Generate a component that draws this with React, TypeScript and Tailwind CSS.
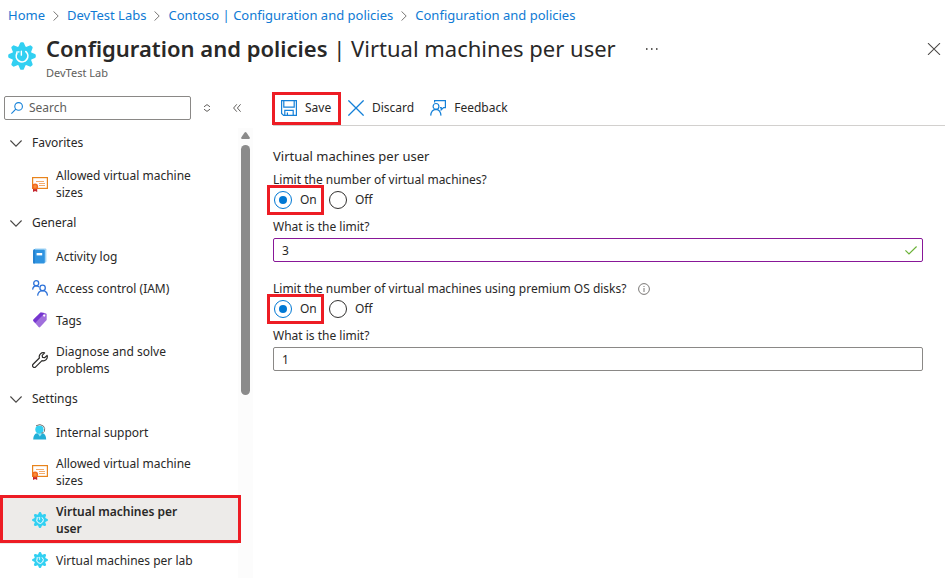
import React from "react";

const SANS = "font-['Noto_Sans','Open_Sans',sans-serif]";

function GearIcon({ className }: { className: string }) {
  return (
    <svg viewBox="0 0 26 26" className={className} aria-hidden="true">
      <g fill="#32d0f2">
        <circle cx="13" cy="13" r="9.2" />
        {[0, 45, 90, 135, 180, 225, 270, 315].map((a) => (
          <path key={a} d="M9.2 5.5 L11.2 1 Q11.5 0.2 12.2 0.2 H13.8 Q14.5 0.2 14.8 1 L16.8 5.5 Z" transform={`rotate(${a} 13 13)`} />
        ))}
      </g>
      <path d="M8.2 10.6 A5.4 5.4 0 1 0 16.6 9" fill="none" stroke="#fff" strokeWidth="1.6" strokeLinecap="round" />
      <path d="M12.4 8.6 V12.2 M8 9.4 L10.2 9.2" stroke="#fff" strokeWidth="1.3" strokeLinecap="round" />
    </svg>
  );
}

function CertificateIcon() {
  return (
    <svg viewBox="0 0 16 16" className="size-4" aria-hidden="true">
      <rect x="0.6" y="1.6" width="14.8" height="10.8" fill="#fff" stroke="#e8841c" strokeWidth="1.2" />
      <path d="M4 5.5 H12 M7 7.5 H13 M7 9.5 H13" stroke="#f2a35c" strokeWidth="0.9" />
      <path d="M1 11 H5.2 V16 L3.1 14.9 L1 16 Z" fill="#c4262e" />
      <circle cx="3.1" cy="10.4" r="3" fill="#f26b21" />
      <circle cx="3.1" cy="10.4" r="1.5" fill="#f9903a" />
    </svg>
  );
}

function BookIcon() {
  return (
    <svg viewBox="0 0 16 16" className="size-4" aria-hidden="true">
      <path d="M3 0.5 H13.4 Q14.4 0.5 14.4 1.5 V13.5 Q14.4 14.5 13.4 14.5 H3 Z" fill="#9fd3f5" />
      <path d="M2.4 1 Q1.2 1.2 1.2 2.4 V14.4 Q1.2 15.6 2.4 15.6 H11.8 Q12.8 15.6 12.8 14.6 V2.6 Q12.8 1.8 11.8 1.8 H3.4 Z" fill="#2f93e0" />
      <path d="M1.2 2.4 V14.4 Q1.2 15.6 2.4 15.6 H2.6 V1.8 Z" fill="#1b78c8" />
      <rect x="4.6" y="5" width="5.6" height="2.4" fill="#fff" />
    </svg>
  );
}

function PeopleIcon() {
  return (
    <svg viewBox="0 0 16 16" className="size-4" fill="none" stroke="#2f73d9" strokeWidth="1.3" aria-hidden="true">
      <circle cx="4.2" cy="3.2" r="2.5" />
      <circle cx="10.6" cy="7.9" r="2.7" />
      <path d="M0.6 9.6 Q1 6 4.2 5.8 Q5.8 5.8 7 7" />
      <path d="M5.6 15.6 Q6.2 10.9 10.6 10.7 Q15 10.9 15.5 15.6" />
    </svg>
  );
}

function TagIcon() {
  return (
    <svg viewBox="0 0 16 16" className="size-4" aria-hidden="true">
      <path d="M8.6 0.6 L13.6 1.2 Q14.6 1.4 14.7 2.4 V8 L8.2 15 Q7.4 15.8 6.6 15 L1.4 9 Q0.9 8.3 1.5 7.6 Z" fill="#a06fdc" />
      <path d="M8.6 0.6 L12.8 1.1 L3.2 11 L1.4 9 Q0.9 8.3 1.5 7.6 Z" fill="#7636d0" />
      <circle cx="12.2" cy="3.6" r="1.1" fill="#fff" />
    </svg>
  );
}

function WrenchIcon() {
  return (
    <svg viewBox="0 0 16 16" className="size-4" fill="none" stroke="#2b2a29" strokeWidth="1.2" strokeLinejoin="round" aria-hidden="true">
      <path d="M12.6 0.9 A4.1 4.1 0 0 0 7.4 6 L1.1 12.2 A1.8 1.8 0 0 0 3.7 14.9 L10 8.6 A4.1 4.1 0 0 0 15.1 3.4 L12.6 5.7 L10.5 5.3 L10.2 3.3 Z" />
    </svg>
  );
}

function SupportIcon() {
  return (
    <svg viewBox="0 0 16 16" className="size-4" aria-hidden="true">
      <path d="M1.2 15.6 Q1.4 9.8 5 9.2 H10.6 Q14 9.8 14.2 15.6 Z" fill="#22aed6" />
      <path d="M5.2 8.8 H10.6 L7.9 12.6 Z" fill="#9be7f7" />
      <circle cx="7.4" cy="5.6" r="4.1" fill="#32d0f2" />
      <path d="M4 1.8 Q8 -0.8 11.4 2 Q13.4 4.4 12.4 7.4 Q11.4 9 9.4 9.2" fill="none" stroke="#767676" strokeWidth="1" />
    </svg>
  );
}

function SaveIcon() {
  return (
    <svg viewBox="0 0 16 16" className="size-4" fill="none" stroke="#1480d8" strokeWidth="1.2" aria-hidden="true">
      <path d="M0.6 0.6 H15.4 V15.4 H2.6 L0.6 13.4 Z" />
      <path d="M2.8 0.6 V7.2 H13.2 V0.6" />
      <path d="M3.8 15.4 V10.4 H12.2 V15.4 M6.4 15 V12.6" />
    </svg>
  );
}

function DiscardIcon() {
  return (
    <svg viewBox="0 0 16 16" className="size-4" stroke="#1480d8" strokeWidth="1.3" aria-hidden="true">
      <path d="M0.4 0.4 L15.6 15.6 M15.6 0.4 L0.4 15.6" />
    </svg>
  );
}

function FeedbackIcon() {
  return (
    <svg viewBox="0 0 16 16" className="size-4" fill="none" stroke="#1480d8" strokeWidth="1.2" aria-hidden="true">
      <path d="M4.6 2.6 V0.6 H15.4 V7.6 H13.6 L11.2 9.8 V7.6 H10" />
      <circle cx="6" cy="6.4" r="2.9" />
      <path d="M0.7 15.6 Q1.2 9.6 6 9.4 Q10.4 9.6 11 15.6" />
    </svg>
  );
}

function ChevronDown() {
  return (
    <svg viewBox="0 0 12 7" className="h-[7px] w-3 shrink-0" fill="none" stroke="#484644" strokeWidth="1.1" aria-hidden="true">
      <path d="M0.4 0.5 L6 6.1 L11.6 0.5" />
    </svg>
  );
}

function Crumb({ children, last }: { children: string; last?: boolean }) {
  return (
    <li className="flex items-center">
      <a href="#" className="text-[#0f7ad4]">{children}</a>
      {!last && (
        <svg viewBox="0 0 6 10" className="mx-2 h-2.5 w-1.5" fill="none" stroke="#797775" aria-hidden="true">
          <path d="M0.5 0.4 L5.2 5 L0.5 9.6" />
        </svg>
      )}
    </li>
  );
}

function Callout({ className }: { className: string }) {
  return <span aria-hidden="true" className={`pointer-events-none absolute z-10 border-[3px] border-[#ed1c24] ${className}`} />;
}

function Group({ title, children }: { title: string; children: React.ReactNode }) {
  return (
    <section>
      <button type="button" className="mb-0.5 flex h-[30px] w-full items-center gap-2.5 pl-2.5 text-left">
        <ChevronDown />
        {title}
      </button>
      <ul>{children}</ul>
    </section>
  );
}

function Item({ icon, tall, selected, children }: { icon: React.ReactNode; tall?: boolean; selected?: boolean; children: string }) {
  return (
    <li className={`relative ${selected ? "bg-[#edebe9] font-semibold" : ""}`}>
      <a href="#" className={`flex items-center gap-2 pl-8 pr-9 leading-[17px] ${tall ? "h-12" : "h-8"}`}>
        <span className="shrink-0">{icon}</span>
        <span>{children}</span>
      </a>
      {selected && <Callout className="-right-[3px] -top-px bottom-px left-0" />}
    </li>
  );
}

const radioStyle =
  "grid size-[18px] appearance-none place-content-center rounded-full border border-[#323130] before:size-2 before:rounded-full checked:border-[#0078d4] checked:before:bg-[#0078d4]";

function LimitField({ id, question, limit, valid, info }: { id: string; question: string; limit: string; valid?: boolean; info?: boolean }) {
  return (
    <fieldset>
      <legend className="flex h-5 items-center">
        {question}
        {info && (
          <svg viewBox="0 0 12 12" className="ml-3 size-3" fill="none" stroke="#797775" aria-hidden="true">
            <circle cx="6" cy="6" r="5.4" />
            <path d="M6 5 V9 M6 3 V4" />
          </svg>
        )}
      </legend>
      <div className="flex h-5 items-center pl-px">
        <label className="relative flex w-[55px] items-center gap-2">
          <input type="radio" name={id} defaultChecked className={radioStyle} />
          On
          <Callout className="-inset-y-[6px] -left-[7px] right-[5px]" />
        </label>
        <label className="flex items-center gap-2">
          <input type="radio" name={id} className={radioStyle} />
          Off
        </label>
      </div>
      <label htmlFor={id} className="mt-2 block h-[18px] leading-[18px]">What is the limit?</label>
      <div className="relative mt-0.5">
        <input
          id={id}
          type="text"
          defaultValue={limit}
          className={`block h-6 w-full rounded-[2px] border px-2 outline-none ${valid ? "border-[#881798]" : "border-[#8a8886]"}`}
        />
        {valid && (
          <svg viewBox="0 0 12 9" className="absolute right-1.5 top-2 h-[9px] w-3" fill="none" stroke="#6bb238" strokeWidth="1.2" aria-hidden="true">
            <path d="M0.4 4.4 L4 8 L11.6 0.5" />
          </svg>
        )}
      </div>
    </fieldset>
  );
}

export default function App() {
  return (
    <div className={`flex h-screen flex-col overflow-hidden bg-white text-xs text-[#292827] ${SANS}`}>
      <header>
        <nav aria-label="Breadcrumb" className="pl-2 text-[13px]">
          <ol className="flex h-[30px] items-center pt-0.5">
            <Crumb>Home</Crumb>
            <Crumb>DevTest Labs</Crumb>
            <Crumb>Contoso | Configuration and policies</Crumb>
            <Crumb last>Configuration and policies</Crumb>
          </ol>
        </nav>
        <div className="flex h-[61px] items-start pl-2 pr-1">
          <GearIcon className="mt-3 size-7" />
          <div className="ml-2.5">
            <h1 className="text-[22px] leading-9">
              <span className="font-semibold">Configuration and policies</span> | Virtual machines per user
            </h1>
            <p className="text-[11px] leading-[14px] text-[#605e5c]">DevTest Lab</p>
          </div>
          <button type="button" aria-label="More" className="ml-[30px] mt-[18px]">
            <svg viewBox="0 0 12 2" className="h-0.5 w-3" fill="#605e5c">
              <rect x="0" width="1.5" height="2" />
              <rect x="5" width="1.5" height="2" />
              <rect x="10" width="1.5" height="2" />
            </svg>
          </button>
          <button type="button" aria-label="Close" className="ml-auto mt-[13px]">
            <svg viewBox="0 0 14 12" className="h-3 w-3.5" stroke="#484644" strokeWidth="1.1">
              <path d="M1 0.2 L13 11.8 M13 0.2 L1 11.8" />
            </svg>
          </button>
        </div>
      </header>

      <div className="flex min-h-0 flex-1">
        <aside className="flex w-[253px] shrink-0 flex-col">
          <div className="flex h-[37px] items-start pl-1 pt-[5px]">
            <label className="flex h-6 w-[187px] items-center gap-1.5 rounded-[2px] border border-[#8a8886] pl-1.5">
              <svg viewBox="0 0 12 12" className="size-3 shrink-0" fill="none" stroke="#1480d8" strokeWidth="1.1" aria-hidden="true">
                <circle cx="7.6" cy="4.4" r="3.8" />
                <path d="M4.8 7.2 L0.4 11.6" />
              </svg>
              <input type="text" aria-label="Search" placeholder="Search" className="w-full min-w-0 outline-none placeholder:text-[#605e5c]" />
            </label>
            <button type="button" aria-label="Expand all" className="ml-3 mt-2">
              <svg viewBox="0 0 8 8" className="size-2" fill="none" stroke="#605e5c">
                <path d="M1 2.8 L4 0.6 L7 2.8 M1 5.2 L4 7.4 L7 5.2" />
              </svg>
            </button>
            <button type="button" aria-label="Collapse menu" className="ml-[22px] mt-2">
              <svg viewBox="0 0 8 8" className="size-2" fill="none" stroke="#605e5c">
                <path d="M3.8 0.3 L0.6 4 L3.8 7.7 M7.6 0.3 L4.4 4 L7.6 7.7" />
              </svg>
            </button>
          </div>
          <div className="flex min-h-0 flex-1">
            <nav aria-label="Resource menu" className="min-w-0 flex-1">
              <Group title="Favorites">
                <Item tall icon={<CertificateIcon />}>Allowed virtual machine sizes</Item>
              </Group>
              <Group title="General">
                <Item icon={<BookIcon />}>Activity log</Item>
                <Item icon={<PeopleIcon />}>Access control (IAM)</Item>
                <Item icon={<TagIcon />}>Tags</Item>
                <Item tall icon={<WrenchIcon />}>Diagnose and solve problems</Item>
              </Group>
              <Group title="Settings">
                <Item icon={<SupportIcon />}>Internal support</Item>
                <Item tall icon={<CertificateIcon />}>Allowed virtual machine sizes</Item>
                <Item tall selected icon={<GearIcon className="size-4" />}>Virtual machines per user</Item>
                <Item icon={<GearIcon className="size-4" />}>Virtual machines per lab</Item>
              </Group>
            </nav>
            <div className="flex w-[15px] flex-col items-center bg-[#fcfcfc] pt-1">
              <svg viewBox="0 0 9 7" className="h-[7px] w-[9px] shrink-0" fill="#8b8b8b" aria-hidden="true">
                <path d="M3.6 0.6 Q4.5 -0.4 5.4 0.6 L8.8 5.6 Q9 7 8 7 H1 Q0 7 0.2 5.6 Z" />
              </svg>
              <div className="mt-1.5 h-[56%] w-[9px] rounded-full bg-[#8b8b8b]" />
            </div>
          </div>
        </aside>

        <main className="min-w-0 flex-1 pl-5">
          <div role="toolbar" className="flex h-[35px] items-center border-b border-[#d2d0ce]">
            <button type="button" className="relative flex h-full w-[68px] items-center gap-2 pl-2">
              <SaveIcon />
              Save
              <Callout className="-left-px bottom-0 right-0 top-px" />
            </button>
            <button type="button" className="ml-[7px] flex items-center gap-2">
              <DiscardIcon />
              Discard
            </button>
            <button type="button" className="ml-4 flex items-center gap-2">
              <FeedbackIcon />
              Feedback
            </button>
          </div>
          <form className="pr-[22px] pt-5">
            <h2 className="mb-1 text-[13px] leading-5">Virtual machines per user</h2>
            <div className="flex flex-col gap-[17px]">
              <LimitField id="vm-limit" question="Limit the number of virtual machines?" limit="3" valid />
              <LimitField id="premium-limit" question="Limit the number of virtual machines using premium OS disks?" limit="1" info />
            </div>
          </form>
        </main>
      </div>
    </div>
  );
}
